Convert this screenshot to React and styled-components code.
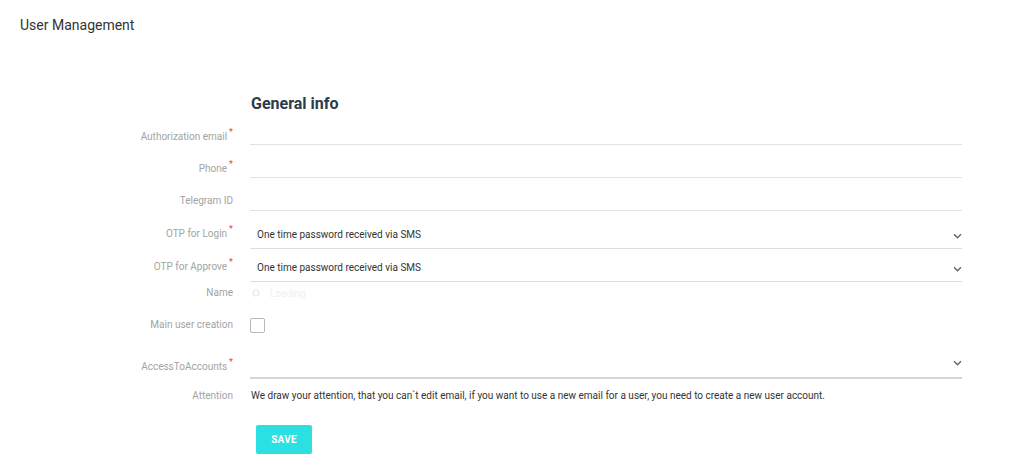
import React from "react";
import styled, { createGlobalStyle } from "styled-components";

const Global = createGlobalStyle`
  html, body { margin: 0; padding: 0; background: #fff; }
  body { font-family: Roboto, "Liberation Sans", Arial, sans-serif; }
  * { box-sizing: border-box; }
`;

const Page = styled.div`
  width: 1024px;
  height: 471px;
  padding: 16px 0 0 20px;
`;

const PageTitle = styled.div`
  font-size: 14px;
  line-height: 18px;
  color: #333;
`;

const Form = styled.div`
  margin-top: 60px;
  margin-left: -20px;
`;

const Heading = styled.h2`
  margin: 0 0 0 251px;
  font-size: 16px;
  line-height: 20px;
  font-weight: 700;
  color: #2d3b4b;
`;

const Row = styled.div`
  display: grid;
  grid-template-columns: 233px 712px;
  column-gap: 17px;
  height: ${(p) => p.$h}px;
  align-items: ${(p) => p.$align || "end"};
`;

const Label = styled.div`
  text-align: right;
  font-size: 10px;
  line-height: 14px;
  color: #a3a3a3;
  padding-bottom: ${(p) => p.$pb || 0}px;
  white-space: nowrap;
`;

const Req = styled.span`
  color: #e0474c;
  font-size: 9px;
  position: relative;
  top: -5px;
  margin-left: 2px;
`;

const TextField = styled.div`
  height: 100%;
  border-bottom: 1px solid #e2e2e2;
`;

const SelectField = styled.div`
  height: 100%;
  display: flex;
  align-items: flex-end;
  justify-content: space-between;
  border-bottom: ${(p) => (p.$thick ? "2px solid #d6d6d6" : "1px solid #dedede")};
  padding: 0 0 ${(p) => p.$pb}px 7px;
  font-size: 10px;
  line-height: 14px;
  color: #333;
`;

const Chevron = styled.svg`
  width: 9px;
  height: 6px;
  margin-bottom: ${(p) => p.$mb || 4}px;
  flex: none;
`;

const Faint = styled.div`
  display: flex;
  align-items: center;
  gap: 10px;
  font-size: 10px;
  color: #f0f0f0;
  padding-left: 2px;
`;

const Checkbox = styled.div`
  width: 15px;
  height: 15px;
  border: 1px solid #b8b8b8;
  border-radius: 2px;
  background: #fff;
`;

const Note = styled.div`
  font-size: 10px;
  line-height: 14px;
  color: #333;
  padding-left: 1px;
`;

const SaveRow = styled.div`
  margin: 13px 0 0 256px;
`;

const SaveButton = styled.button`
  width: 56px;
  height: 29px;
  border: none;
  border-radius: 2px;
  background: #2be0e0;
  color: #fff;
  font-family: Roboto, "Liberation Sans", Arial, sans-serif;
  font-weight: 700;
  font-size: 10px;
  letter-spacing: 0.2px;
  padding: 0;
`;

const Down = ({ mb }) => (
  <Chevron $mb={mb} viewBox="0 0 9 6">
    <path d="M1 1.2 L4.5 4.7 L8 1.2" fill="none" stroke="#666" strokeWidth="1.4" />
  </Chevron>
);

export default function App() {
  return (
    <>
      <Global />
      <Page>
        <PageTitle>User Management</PageTitle>
        <Form>
          <Heading>General info</Heading>
          <Row $h={31}>
            <Label $pb={1}>Authorization email<Req>*</Req></Label>
            <TextField />
          </Row>
          <Row $h={33}>
            <Label $pb={2}>Phone<Req>*</Req></Label>
            <TextField />
          </Row>
          <Row $h={33}>
            <Label $pb={3}>Telegram ID</Label>
            <TextField />
          </Row>
          <Row $h={38}>
            <Label $pb={8}>OTP for Login<Req>*</Req></Label>
            <SelectField $pb={6}>
              <span>One time password received via SMS</span>
              <Down mb={3} />
            </SelectField>
          </Row>
          <Row $h={33}>
            <Label $pb={8}>OTP for Approve<Req>*</Req></Label>
            <SelectField $pb={6}>
              <span>One time password received via SMS</span>
              <Down mb={3} />
            </SelectField>
          </Row>
          <Row $h={22} $align="center">
            <Label>Name</Label>
            <Faint>
              <svg width="8" height="8" viewBox="0 0 8 8">
                <circle cx="4" cy="4" r="3" fill="none" stroke="#e6e6e6" strokeWidth="1.2" />
              </svg>
              <span>Loading</span>
            </Faint>
          </Row>
          <Row $h={42} $align="center">
            <Label>Main user creation</Label>
            <Checkbox />
          </Row>
          <Row $h={33}>
            <Label $pb={5}>AccessToAccounts<Req>*</Req></Label>
            <SelectField $thick $pb={8}>
              <span />
              <Down mb={3} />
            </SelectField>
          </Row>
          <Row $h={33} $align="center">
            <Label>Attention</Label>
            <Note>
              We draw your attention, that you can`t edit email, if you want to use a new email for a user, you need to create a new user account.
            </Note>
          </Row>
          <SaveRow>
            <SaveButton>SAVE</SaveButton>
          </SaveRow>
        </Form>
      </Page>
    </>
  );
}
